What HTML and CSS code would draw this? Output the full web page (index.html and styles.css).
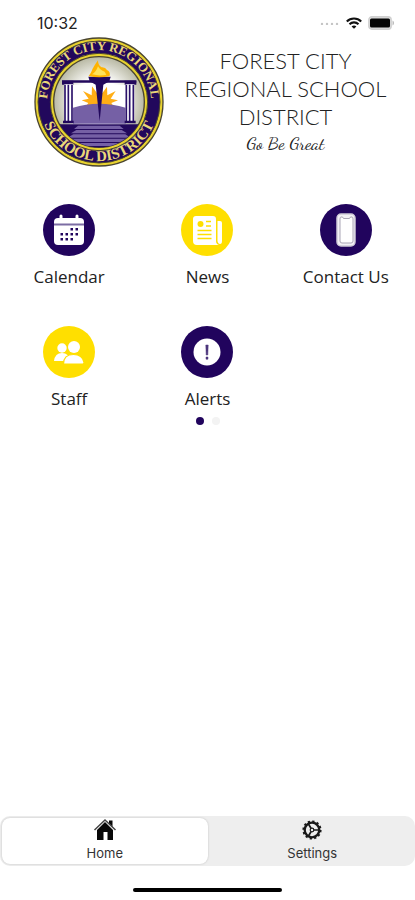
FILE: index.html
```html
<!DOCTYPE html>
<html lang="en">
<head>
<meta charset="utf-8">
<meta name="viewport" content="width=device-width, initial-scale=1">
<title>Forest City Regional School District</title>
<link rel="stylesheet" href="styles.css">
</head>
<body>
<div class="status">
  <span class="time">10:32</span>
  <div class="indicators">
    <svg width="20" height="4" viewBox="0 -1 20 4" fill="#c4c4c4"><circle cx="2" cy="2" r="1.2"/><circle cx="7" cy="2" r="1.2"/><circle cx="12" cy="2" r="1.2"/><circle cx="17" cy="2" r="1.2"/></svg>
    <svg width="16" height="12" viewBox="0 0 16 12" fill="none" stroke="#111" stroke-width="2.1"><path d="M.8 4.4C4.8.5 11.2.5 15.2 4.4M3.5 7.2c2.5-2.5 6.500-2.500 9 0"/><path d="M8 11.800 5.600 9.400c1.300-1.300 3.500-1.300 4.800 0z" fill="#111" stroke="none"/></svg>
    <svg width="27" height="14" viewBox="0 0 27 14"><rect x=".8" y=".8" width="22.400" height="12.400" rx="3" fill="#ddd" stroke="#d0d0d0" stroke-width="1.400"/><rect x="2" y="2.500" width="20" height="9" rx="1.500" fill="#050505"/><path d="M24.500 4.500c2 .7 2 4.300 0 5z" fill="#bbb"/></svg>
  </div>
</div>
<header class="header">
  <svg class="seal" viewBox="27 20 390 390" role="img" aria-label="District seal">
    <defs>
      <path id="arc-top" d="M118 331.500a156 156 0 1 1 208 0"/>
      <path id="arc-bottom" d="M65 130a178 178 0 1 0 314 0"/>
      <clipPath id="disc"><circle cx="222" cy="215" r="136"/></clipPath>
      <radialGradient id="glow"><stop offset="0.5" stop-color="#fff"/><stop offset="1" stop-color="#b9b9a4"/></radialGradient>
    </defs>
    <circle cx="222" cy="215" r="192" fill="#e8d230" stroke="#4a4530" stroke-width="4"/>
    <circle cx="222" cy="215" r="183" fill="#22085c" stroke="#4a4530" stroke-width="3"/>
    <circle cx="222" cy="215" r="146" fill="#e8d230" stroke="#4a4530" stroke-width="3"/>
    <circle cx="222" cy="215" r="136" fill="url(#glow)" stroke="#4a4530" stroke-width="4"/>
    <g clip-path="url(#disc)">
      <path d="M144 163h158v70H144z" fill="#fff"/>
      <path d="m170 210 21-5-17-23 26 13 1-27 17 23 12 0 16-22 1 26 25-13-15 23 22 5-20 8 6 10h-82l7-10z" fill="#ffae16"/>
      <path d="M144 232q78-24 158 0v48H144z" fill="#7560a5"/>
      <path d="M111 150h223v7H111z" fill="#22085c"/>
      <path d="M111 151h34v12h-34zM299 151h35v12h-35z" fill="#22085c"/>
      <path d="M118 162h26v113h-26zM302 162h26v113h-26z" fill="#fff"/>
      <path d="M120 163v111M130 163v111M141 163v111M304 163v111M314 163v111M325 163v111" stroke="#2b126a" stroke-width="5"/>
      <path d="M114 271h32v8h-32zM299 271h33v8h-33z" fill="#22085c"/>
      <path d="M80 282h284v90H80z" fill="#22085c"/>
      <path d="M159 286h125l12 10H147zM154 299h136l16 10H138zM145 312h156l16 10H127zM136 325h174l17 10H117zM120 338h204v9H120z" fill="#7560a5"/>
    </g>
    <path d="M190 139h67l-4 14-18 10-11 110-12-110-18-10z" fill="#22085c"/>
    <path d="M191 137q7-8 10-17 3-9 18-30-1 14 11 21 11-1 16 8 11 5 8 18-31 8-63 0z" fill="#ffb300"/>
    <path d="M201 132q12-6 18-24 6 12 20 16l5 9q-20 5-43-1z" fill="#ffe25a"/>
    <g class="seal-text"><text class="seal-top"><textPath href="#arc-top" startOffset="50%">FOREST CITY REGIONAL</textPath></text><text class="seal-bottom"><textPath href="#arc-bottom" startOffset="50%">SCHOOL DISTRICT</textPath></text></g>
  </svg>
  <div class="heading">
    <h1>FOREST CITY REGIONAL SCHOOL DISTRICT</h1>
    <p>Go Be Great</p>
  </div>
</header>
<main>
  <nav class="grid" aria-label="Sections">
    <a href="#calendar"><svg class="icon navy" viewBox="0 0 52 52"><rect x="11" y="14" width="30" height="27" rx="4" fill="#fff"/><path d="M18 15v-3M34 15v-3" stroke="#fff" stroke-width="3" stroke-linecap="round"/><path d="M11 20.500h30" stroke="#7c6da3" stroke-width="2"/><path d="M27.500 24h2.500v2.500h-2.500zM32.500 24H35v2.500h-2.500zM17.500 29H20v2.500h-2.500zM22.500 29H25v2.500h-2.500zM27.500 29H30v2.500h-2.500zM32.500 29H35v2.500h-2.500zM17.500 34H20v2.500h-2.500zM22.500 34H25v2.500h-2.500zM27.500 34H30v2.500h-2.500z" fill="#21045d"/></svg>Calendar</a>
    <a href="#news"><svg class="icon yellow" viewBox="0 0 52 52"><path d="M15 12h17q3 0 3 3v22q0 3 3 4H16q-4 0-4-4V15q0-3 3-3z" fill="#fff"/><path d="M36.500 17H39q2 0 2 2v18q0 3-2 3t-2.500-3z" fill="#fff"/><circle cx="19.500" cy="20" r="3" fill="#ffdf00"/><path d="M25 17.500h5M25 22h5M16.500 26.500h14M16.500 30.500h14M16.500 34.500h14" stroke="#ffdf00" stroke-width="1.600"/></svg>News</a>
    <a href="#contact"><svg class="icon navy" viewBox="0 0 52 52"><rect x="17" y="10" width="18" height="32" rx="4" fill="#f3f1f5" stroke="#d0cbd8" stroke-width="1.500"/><path d="M21 13h1.500l1 1.500h6l1-1.500H32q1 0 1 2v22q0 2-2 2h-9q-2 0-2-2V15q0-2 1-2z" fill="#fff" stroke="#aaa5b5" stroke-width="1"/></svg>Contact Us</a>
    <a href="#staff"><svg class="icon yellow" viewBox="0 0 52 52" fill="#fff"><circle cx="19" cy="22" r="4.700"/><path d="M11 35q1-8 8-8t8 8z"/><circle cx="31" cy="21" r="6"/><path d="M20.500 38q0-9.500 10-9.500 9 0 10.500 8 0 1.500-1.500 1.500z" stroke="#ffdf00" stroke-width="1.200"/></svg>Staff</a>
    <a href="#alerts"><svg class="icon navy" viewBox="0 0 52 52"><circle cx="26" cy="26" r="13.500" fill="#fff"/><path d="M24.800 19h2.400l-.4 10h-1.600zM25 31h2v2.200h-2z" fill="#4c367c" stroke="#4c367c" stroke-width=".5"/></svg>Alerts</a>
  </nav>
  <div class="pager"><span class="dot active"></span><span class="dot"></span></div>
</main>
<nav class="tabs" aria-label="Main">
  <button class="tab selected" type="button"><svg width="24" height="24" viewBox="0 0 24 24"><path d="M16 2.500h3.500V9L16 5.500zM4 12l8-8 8 8v10h-5.500v-8h-4v8H4z" fill="#080808"/><path d="M1.500 12 12 2l10.500 10" fill="none" stroke="#444" stroke-width="1.500"/></svg>Home</button>
  <button class="tab" type="button"><svg width="24" height="24" viewBox="0 0 24 24" fill="none" stroke="#191919"><circle cx="12" cy="12" r="8.600" stroke-width="2" stroke-dasharray="2.250 2.250"/><circle cx="12" cy="12" r="7.300" stroke-width="2.300"/><circle cx="12" cy="12" r="1.800" stroke-width="1.200"/><path d="M13.800 12h5M11 10.300 8.300 5.800M11 13.700l-2.700 4.500" stroke-width="1.700"/></svg>Settings</button>
</nav>
<div class="home-bar"></div>
</body>
</html>
```
FILE: styles.css
```css
* { box-sizing: border-box; }
body {
  margin: 0;
  min-height: 100vh;
  display: flex;
  flex-direction: column;
  background: #fff;
  color: #222;
  font-family: "Open Sans", sans-serif;
}
.status {
  display: flex;
  justify-content: space-between;
  align-items: center;
  height: 37px;
  padding: 9px 20px 0 37px;
}
.time {
  font: 400 16px/20px Inter, sans-serif;
}
.indicators {
  display: flex;
  align-items: center;
  gap: 6px;
}
.header {
  display: flex;
  align-items: flex-start;
  padding: 0 8px 0 34px;
}
.seal {
  flex: none;
  width: 130px;
  height: 130px;
}
.seal-text {
  font-family: "Liberation Serif", serif;
  font-weight: 700;
  fill: #ead878;
  text-anchor: middle;
}
.seal-top { font-size: 38px; }
.seal-bottom { font-size: 45px; }
.heading {
  flex: 1;
  padding-top: 10px;
  text-align: center;
}
h1 {
  margin: 0 auto;
  max-width: 220px;
  font: 300 22px/28px Lato, sans-serif;
}
.heading p {
  margin: 0;
  font: 18px/24px "Dancing Script", cursive;
}
.grid {
  display: grid;
  grid-template-columns: repeat(3, 1fr);
  row-gap: 37px;
  padding-top: 37px;
}
.grid a {
  display: flex;
  flex-direction: column;
  align-items: center;
  gap: 9px;
  color: #222;
  font-size: 17px;
  font-weight: 400;
  line-height: 24px;
  text-decoration: none;
}
.icon {
  width: 52px;
  height: 52px;
  border-radius: 50%;
}
.navy { background: #21045d; }
.yellow { background: #ffdf00; }
.pager {
  display: flex;
  justify-content: center;
  gap: 8px;
  padding-top: 6px;
}
.dot {
  width: 8px;
  height: 8px;
  border-radius: 50%;
  background: #f3f3f3;
}
.dot.active { background: #21045d; }
.tabs {
  display: flex;
  gap: 2px;
  margin-top: auto;
  padding: 2px 0 2px 2px;
  border-radius: 10px;
  background: #eee;
}
.tab {
  flex: 1;
  display: flex;
  flex-direction: column;
  align-items: center;
  gap: 2px;
  padding: 0 0 2px;
  border: 0;
  border-radius: 8px;
  background: transparent;
  color: #333;
  font: 13px/18px Inter, sans-serif;
}
.tab.selected {
  background: #fff;
  box-shadow: 0 0 2px #bbb;
}
.home-bar {
  width: 36%;
  height: 4px;
  margin: 22px auto 8px;
  border-radius: 2px;
  background: #000;
}
```
